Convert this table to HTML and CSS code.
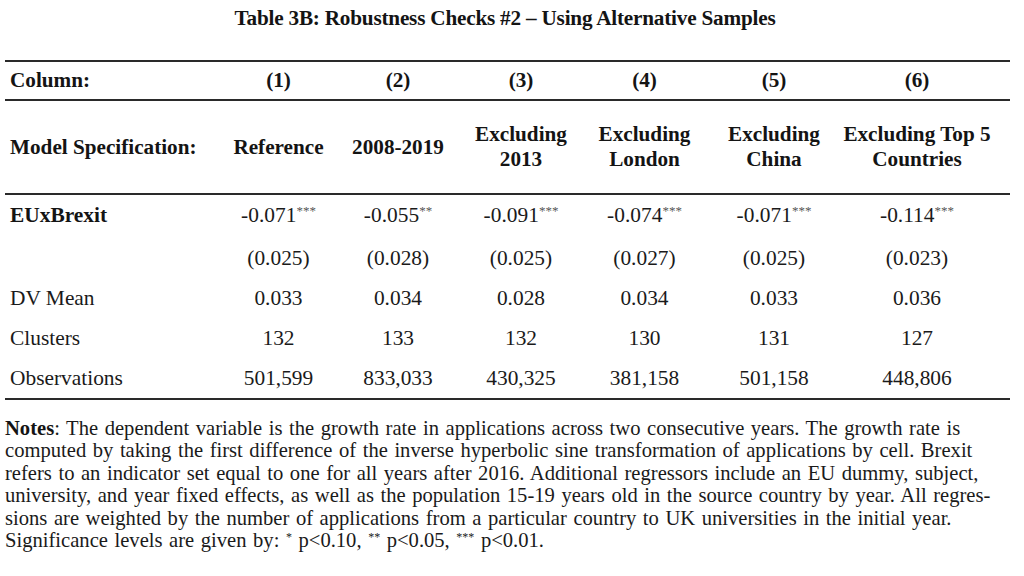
FILE: index.html
```html
<!DOCTYPE html>
<html lang="en">
<head>
<meta charset="utf-8">
<title>Table 3B</title>
<link rel="stylesheet" href="styles.css">
</head>
<body>
<div class="page">
  <h1 class="title">Table 3B: Robustness Checks #2 – Using Alternative Samples</h1>
  <table class="results">
    <colgroup>
      <col class="c-label"><col class="c1"><col class="c2"><col class="c3"><col class="c4"><col class="c5"><col class="c6">
    </colgroup>
    <thead>
      <tr class="row-col">
        <th class="label">Column:</th>
        <th>(1)</th><th>(2)</th><th>(3)</th><th>(4)</th><th>(5)</th><th class="last">(6)</th>
      </tr>
      <tr class="row-spec">
        <th class="label">Model Specification:</th>
        <th>Reference</th>
        <th>2008-2019</th>
        <th>Excluding<br>2013</th>
        <th>Excluding<br>London</th>
        <th>Excluding<br>China</th>
        <th class="last">Excluding Top 5<br>Countries</th>
      </tr>
    </thead>
    <tbody>
      <tr>
        <td class="label strong">EUxBrexit</td>
        <td>-0.071<sup>***</sup></td>
        <td>-0.055<sup>**</sup></td>
        <td>-0.091<sup>***</sup></td>
        <td>-0.074<sup>***</sup></td>
        <td>-0.071<sup>***</sup></td>
        <td class="last">-0.114<sup>***</sup></td>
      </tr>
      <tr>
        <td class="label"></td>
        <td>(0.025)</td><td>(0.028)</td><td>(0.025)</td><td>(0.027)</td><td>(0.025)</td><td class="last">(0.023)</td>
      </tr>
      <tr>
        <td class="label">DV Mean</td>
        <td>0.033</td><td>0.034</td><td>0.028</td><td>0.034</td><td>0.033</td><td class="last">0.036</td>
      </tr>
      <tr>
        <td class="label">Clusters</td>
        <td>132</td><td>133</td><td>132</td><td>130</td><td>131</td><td class="last">127</td>
      </tr>
      <tr>
        <td class="label">Observations</td>
        <td>501,599</td><td>833,033</td><td>430,325</td><td>381,158</td><td>501,158</td><td class="last">448,806</td>
      </tr>
    </tbody>
  </table>
  <p class="notes">
    <span class="ln"><b>Notes</b>: The dependent variable is the growth rate in applications across two consecutive years. The growth rate is</span>
    <span class="ln">computed by taking the first difference of the inverse hyperbolic sine transformation of applications by cell. Brexit</span>
    <span class="ln">refers to an indicator set equal to one for all years after 2016. Additional regressors include an EU dummy, subject,</span>
    <span class="ln">university, and year fixed effects, as well as the population 15-19 years old in the source country by year. All regres-</span>
    <span class="ln">sions are weighted by the number of applications from a particular country to UK universities in the initial year.</span>
    <span class="ln">Significance levels are given by: <sup>*</sup> p&lt;0.10, <sup>**</sup> p&lt;0.05, <sup>***</sup> p&lt;0.01.</span>
  </p>
</div>
</body>
</html>
```

FILE: styles.css
```css
html, body {
  margin: 0;
  padding: 0;
  background: #ffffff;
}

body {
  font-family: "Liberation Serif", "Times New Roman", serif;
  color: #1a1a1a;
  width: 1024px;
  height: 576px;
  overflow: hidden;
}

.page {
  padding: 0 14px 0 5px;
}

.title {
  margin: 0;
  width: 1000px;
  height: 60px;
  padding-top: 6px;
  box-sizing: border-box;
  text-align: center;
  font-size: 21.2px;
  line-height: 24px;
  font-weight: bold;
  letter-spacing: -0.2px;
  color: #141414;
}

.results {
  width: 1005px;
  table-layout: fixed;
  border-collapse: collapse;
  border-top: 2px solid #2a2a2a;
  border-bottom: 2px solid #2a2a2a;
  font-size: 21.4px;
}

.c-label { width: 215px; }
.c1 { width: 117px; }
.c2 { width: 122px; }
.c3 { width: 124px; }
.c4 { width: 123px; }
.c5 { width: 136px; }
.c6 { width: 168px; }

.results th,
.results td {
  padding: 0;
  text-align: center;
  vertical-align: middle;
  white-space: nowrap;
}

.results th {
  font-weight: bold;
  color: #141414;
  line-height: 25px;
  font-size: 21.2px;
}

.results .label {
  text-align: left;
  padding-left: 5px;
}

.results .last {
  padding-right: 18px;
}

.row-col th {
  height: 37px;
  border-bottom: 2px solid #2a2a2a;
}

.row-spec th {
  height: 92px;
  border-bottom: 2px solid #2a2a2a;
}

.results td {
  height: 40px;
  line-height: 24px;
}

.results tbody tr:first-child td {
  padding-bottom: 3px;
}

.results .strong {
  font-weight: bold;
  color: #141414;
}

sup {
  font-size: 13px;
  line-height: 0;
  vertical-align: 7px;
  color: #555555;
  letter-spacing: 0;
}

.notes {
  margin: 17px 0 0 0;
  font-size: 20.6px;
  line-height: 22.4px;
  word-spacing: 1.4px;
}

.notes .ln {
  display: block;
  white-space: nowrap;
}

.notes b {
  font-weight: bold;
  color: #141414;
}

.notes sup {
  color: #1a1a1a;
  font-size: 12px;
  vertical-align: 6px;
}
```
